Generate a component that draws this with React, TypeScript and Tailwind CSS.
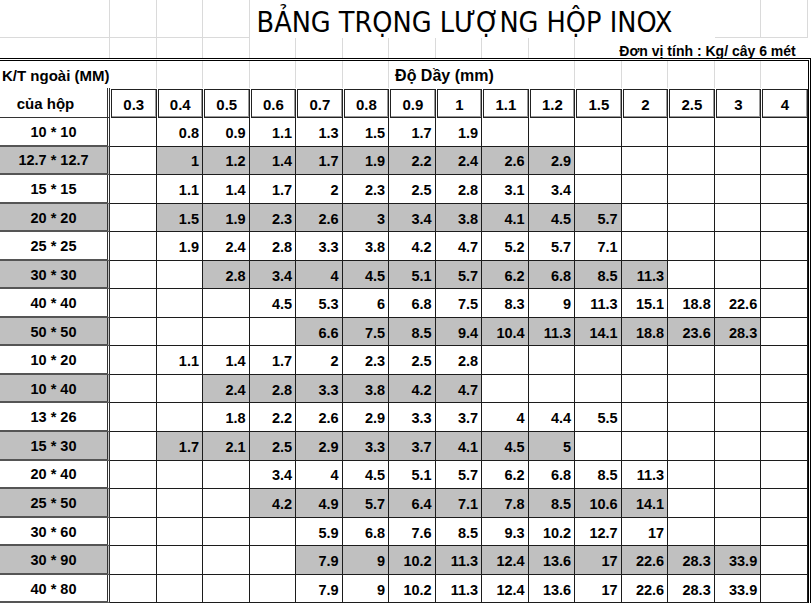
import React from 'react'

const thickness = ['0.3', '0.4', '0.5', '0.6', '0.7', '0.8', '0.9', '1', '1.1', '1.2', '1.5', '2', '2.5', '3', '4']

// label, shaded row, values left to right (blank = empty cell)
const rows: [string, boolean, string][] = [
  ['10 * 10', false, ',0.8,0.9,1.1,1.3,1.5,1.7,1.9'],
  ['12.7 * 12.7', true, ',1,1.2,1.4,1.7,1.9,2.2,2.4,2.6,2.9'],
  ['15 * 15', false, ',1.1,1.4,1.7,2,2.3,2.5,2.8,3.1,3.4'],
  ['20 * 20', true, ',1.5,1.9,2.3,2.6,3,3.4,3.8,4.1,4.5,5.7'],
  ['25 * 25', false, ',1.9,2.4,2.8,3.3,3.8,4.2,4.7,5.2,5.7,7.1'],
  ['30 * 30', true, ',,2.8,3.4,4,4.5,5.1,5.7,6.2,6.8,8.5,11.3'],
  ['40 * 40', false, ',,,4.5,5.3,6,6.8,7.5,8.3,9,11.3,15.1,18.8,22.6'],
  ['50 * 50', true, ',,,,6.6,7.5,8.5,9.4,10.4,11.3,14.1,18.8,23.6,28.3'],
  ['10 * 20', false, ',1.1,1.4,1.7,2,2.3,2.5,2.8'],
  ['10 * 40', true, ',,2.4,2.8,3.3,3.8,4.2,4.7'],
  ['13 * 26', false, ',,1.8,2.2,2.6,2.9,3.3,3.7,4,4.4,5.5'],
  ['15 * 30', true, ',1.7,2.1,2.5,2.9,3.3,3.7,4.1,4.5,5'],
  ['20 * 40', false, ',,,3.4,4,4.5,5.1,5.7,6.2,6.8,8.5,11.3'],
  ['25 * 50', true, ',,,4.2,4.9,5.7,6.4,7.1,7.8,8.5,10.6,14.1'],
  ['30 * 60', false, ',,,,5.9,6.8,7.6,8.5,9.3,10.2,12.7,17'],
  ['30 * 90', true, ',,,,7.9,9,10.2,11.3,12.4,13.6,17,22.6,28.3,33.9'],
  ['40 * 80', false, ',,,,7.9,9,10.2,11.3,12.4,13.6,17,22.6,28.3,33.9'],
]

const grid = 'grid grid-cols-[110px_repeat(15,46.53px)]'

function valuesOf(s: string) {
  const v = s.split(',')
  while (v.length < 15) v.push('')
  return v
}

export default function App() {
  return (
    <div className="w-[811px] h-[605px] overflow-hidden bg-white text-black font-['Liberation_Sans',Arial,sans-serif]">
      {/* Title band with spreadsheet gridlines */}
      <div className={`${grid} h-[38px]`}>
        {Array.from({ length: 4 }).map((_, i) => (
          <div key={i} className="border-r border-b border-[#dadada]" />
        ))}
        <div className="col-span-10 flex items-center pl-[7px] pt-[9px] bg-white text-[28.5px] leading-none whitespace-nowrap font-['Liberation_Sans_Narrow','Arial_Narrow','DejaVu_Sans_Condensed',sans-serif]">
          BẢNG TRỌNG LƯỢNG HỘP INOX
        </div>
        {Array.from({ length: 2 }).map((_, i) => (
          <div key={i} className="border-r border-b border-[#dadada]" />
        ))}
      </div>
      <div className={`${grid} h-[20px]`}>
        {Array.from({ length: 11 }).map((_, i) => (
          <div key={i} className="border-r border-[#dadada]" />
        ))}
        <div className="col-span-5 flex items-center justify-end pr-[12px] pt-[5px] text-[14px] leading-none font-bold whitespace-nowrap font-['Liberation_Sans_Narrow','Arial_Narrow',sans-serif]">
          Đơn vị tính : Kg/ cây 6 mét
        </div>
      </div>

      {/* Table */}
      <div className="border-t-[3px] border-r-[3px] border-double border-black w-[811px]">
        {/* Header row 1 */}
        <div className={`${grid} h-[27px] text-[15px] font-bold`}>
          <div className="flex items-center pl-[2px] pt-[3px] whitespace-nowrap">K/T ngoài (MM)</div>
          {Array.from({ length: 6 }).map((_, i) => (
            <div key={i} className="border-r border-[#dadada]" />
          ))}
          <div className="col-span-3 flex items-center pl-[6px] pt-[3px] text-[16px] whitespace-nowrap">Độ Dầy (mm)</div>
          {Array.from({ length: 6 }).map((_, i) => (
            <div key={i} className={i < 5 ? 'border-r border-[#dadada]' : ''} />
          ))}
        </div>

        {/* Header row 2 */}
        <div className={`${grid} h-[30px] text-[15px] font-bold`}>
          <div className="flex items-center justify-center pr-[16px] pt-[4px] border-r-[3px] border-b border-double border-[#333]">
            của hộp
          </div>
          {thickness.map((t) => (
            <div
              key={t}
              className="ml-px mt-px border border-[#222] shadow-[inset_-1px_-1px_0_#9a9a9a] flex items-center justify-center pt-[3px]"
            >
              {t}
            </div>
          ))}
        </div>

        {/* Data rows */}
        {rows.map(([label, shaded, vals]) => (
          <div key={label} className={`${grid} h-[28.56px] text-[14.5px] font-bold`}>
            <div
              className={`flex items-center justify-center pt-[3px] border-r-[3px] border-double border-b-2 border-b-[#555] border-r-[#333] ${
                shaded ? 'bg-[#c0c0c0]' : 'bg-white'
              }`}
            >
              {label}
            </div>
            {valuesOf(vals).map((v, i) => (
              <div
                key={i}
                className={`flex items-center justify-end pr-[3px] pt-[4px] border-r border-b border-[#1c1c1c] ${
                  shaded && v ? 'bg-[#c0c0c0]' : 'bg-white'
                }`}
              >
                {v}
              </div>
            ))}
          </div>
        ))}
      </div>
    </div>
  )
}
